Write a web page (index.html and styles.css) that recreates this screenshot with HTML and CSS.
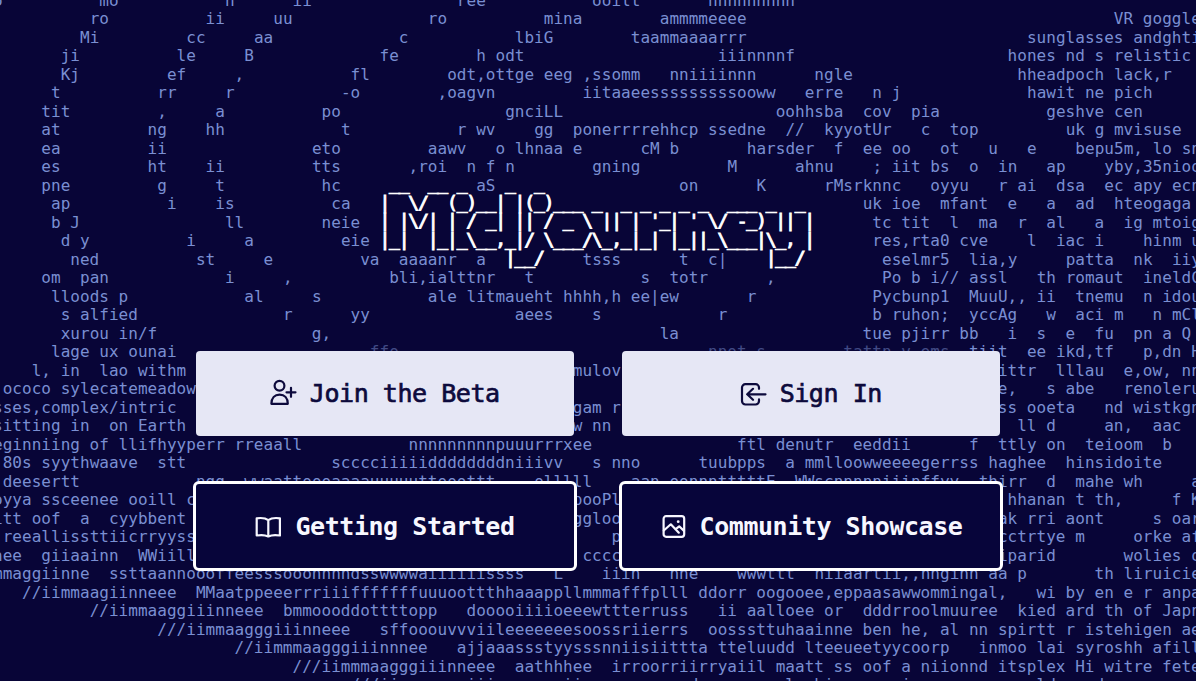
FILE: index.html
```html
<!DOCTYPE html>
<html lang="en">
<head>
<meta charset="utf-8">
<title>Midjourney</title>
<link rel="stylesheet" href="styles.css">
</head>
<body>
<main class="hero">
<pre class="field" id="field" aria-hidden="true"></pre>
<pre class="logo" aria-label="Midjourney"> __  __ _    _  _
|  \/  (_)__| |(_)___ _  _ _ _ _ _  ___ _  _
| |\/| | / _| || / _ \ || | '_| ' \/ -_) || |
|_|  |_|_\__,_|/ \___/\_,_|_| |_||_\___|\_, |
             |__/                       |__/</pre>
<nav class="actions">
  <a class="btn btn-light">
    <svg class="icon" viewBox="0 0 28 28"><circle cx="9.500" cy="6.800" r="4.900"/><path d="M1.400 24.800c0-6 3.400-9.200 8.200-9.200s8.200 3.200 8.200 9.200z"/><path d="M21 8.800v9M16.500 13.300h9"/></svg>
    <span>Join the Beta</span>
  </a>
  <a class="btn btn-light">
    <svg class="icon" viewBox="0 0 28 28"><path d="M19 9.800V8.600a3.400 3.400 0 0 0-3.400-3.400H5.400A3.400 3.400 0 0 0 2 8.600v13.500a3.400 3.400 0 0 0 3.400 3.400h10.200a3.400 3.400 0 0 0 3.400-3.400v-1.700"/><path d="M25.500 15.300H7.200M13 9.800l-5.800 5.500 5.800 5.500"/></svg>
    <span>Sign In</span>
  </a>
  <a class="btn btn-dark">
    <svg class="icon" viewBox="0 0 28 28"><path d="M13.300 8.200C10.500 6 6 5.700 1.700 6.300v17.200c4.300-.8 8.800-.4 11.600 1 2.800-1.400 7.300-1.800 11.600-1V6.300c-4.300-.6-8.800-.3-11.600 1.900zV24"/></svg>
    <span>Getting Started</span>
  </a>
  <a class="btn btn-dark">
    <svg class="icon" viewBox="0 0 28 28"><rect x="3.600" y="4.200" width="20.600" height="20.600" rx="2.500"/><path d="M3.800 18.500l7-6.200 8 8.400M15.400 17.300l3.800-3 4.800 4.600"/><circle class="dot" cx="18.200" cy="9.700" r="1.400"/></svg>
    <span>Community Showcase</span>
  </a>
</nav>
</main>
<script src="field.js"></script>
</body>
</html>
```
FILE: styles.css
```css
html, body {
  margin: 0;
  height: 100%;
  overflow: hidden;
  background: #080537;
}

.hero {
  position: relative;
  box-sizing: border-box;
  width: 1196px;
  height: 681px;
  overflow: hidden;
  padding: 175px 193px 0;
}

.field,
.logo {
  margin: 0;
  white-space: pre;
  font-family: "DejaVu Sans Mono", monospace;
  line-height: 18.5px;
}

.field {
  position: absolute;
  top: -8.3px;
  left: -7px;
  font-size: 16px;
  letter-spacing: 0.029px;
  color: #7a8fd2;
}

.faded { opacity: 0.5; }

.logo {
  position: relative;
  height: 173px;
  padding-left: 186.4px;
  font-size: 18px;
  letter-spacing: -1.18px;
  color: #fff;
  -webkit-text-stroke: 1px #fff;
}

.actions {
  position: relative;
  display: grid;
  grid-template-columns: 384px 384px;
  grid-auto-rows: 90px;
  gap: 43px 42px;
}

.btn {
  box-sizing: border-box;
  display: flex;
  align-items: center;
  justify-content: center;
  gap: 12px;
  border-radius: 6px;
  font-family: "DejaVu Sans Mono", monospace;
  font-size: 25px;
  letter-spacing: -0.45px;
  white-space: pre;
}

.btn-light {
  margin: 2.5px 3px 2.5px 2.5px;
  border-radius: 4px;
  background: #e6e7f5;
  color: #0d0a3c;
  -webkit-text-stroke: 0.7px #0d0a3c;
}

.btn-dark {
  border: 3px solid #fff;
  background: #07053a;
  color: #f7f7ff;
  font-weight: 700;
}

.icon {
  flex: none;
  width: 28px;
  height: 28px;
  fill: none;
  stroke: currentColor;
  stroke-width: 2.2;
  stroke-linecap: round;
  stroke-linejoin: round;
}

.dot {
  fill: currentColor;
  stroke: none;
}
```
FILE: field.js
```js
// Each row lists its words as: column, text, column, text ...
// A leading "~" marks a word that is drawn faded.
const rows = [
  [0,"o",11,"mo",24,"n",31,"ii",48,"ree",62,"ooilt",74,"nnnnnnnnn"],
  [10,"ro",22,"ii",29,"uu",45,"ro",57,"mina",69,"ammmmeeee",116,"VR goggle"],
  [9,"Mi",20,"cc",27,"aa",42,"c",54,"lbiG",66,"taammaaaarrr",107,"sunglasses andghti"],
  [7,"ji",19,"le",26,"B",40,"fe",50,"h odt",75,"iiinnnnf",105,"hones nd s relistic"],
  [7,"Kj",18,"ef",25,",",37,"fl",47,"odt,ottge eeg ,ssomm",70,"nniiiinnn",85,"ngle",106,"hheadpoch lack,r"],
  [6,"t",17,"rr",24,"r",36,"-o",46,",oagvn",61,"iitaaeesssssssssooww",84,"erre",91,"n j",107,"hawit ne pich"],
  [5,"tit",17,",",23,"a",34,"po",53,"gnciLL",81,"oohhsba",90,"cov",95,"pia",109,"geshve cen"],
  [5,"at",16,"ng",22,"hh",36,"t",48,"r wv",56,"gg",60,"ponerrrrehhcp ssedne",82,"//",86,"kyyotUr",96,"c",99,"top",111,"uk g mvisuse"],
  [5,"ea",16,"ii",33,"eto",45,"aawv",52,"o lhnaa e",67,"cM b",78,"harsder",87,"f",90,"ee oo",98,"ot",103,"u",107,"e",112,"bepu5m, lo sn"],
  [5,"es",16,"ht",22,"ii",33,"tts",43,",roi",49,"n f n",62,"gning",76,"M",83,"ahnu",91,"; iit bs",101,"o",104,"in",109,"ap",115,"yby,35nioo"],
  [5,"pne",17,"g",23,"t",34,"hc",50,"aS",71,"on",79,"K",86,"rMsrknnc",97,"oyyu",104,"r ai",110,"dsa",115,"ec apy ecn"],
  [6,"ap",18,"i",23,"is",35,"ca",90,"uk ioe",98,"mfant",105,"e",109,"a",112,"ad",116,"hteogaga"],
  [6,"b J",24,"ll",34,"neie",91,"tc tit",99,"l",102,"ma",106,"r",109,"al",114,"a",117,"ig mtoig"],
  [7,"d y",20,"i",26,"a",36,"eie",91,"res,rta0 cve",107,"l",110,"iac i",119,"hinm u"],
  [8,"ned",21,"st",28,"e",38,"va",42,"aaaanr",50,"a",61,"tsss",71,"t",74,"c|",92,"eselmr5",101,"lia,y",111,"patta",118,"nk",122,"iiy"],
  [5,"om",9,"pan",24,"i",30,",",41,"bli,ialttnr",55,"t",67,"s",70,"totr",80,",",92,"Po b i// assl",108,"th romaut",119,"ineldC"],
  [6,"lloods p",26,"al",33,"s",45,"ale litmaueht hhhh,h ee|ew",78,"r",91,"Pycbunp1",101,"MuuU,, ii",112,"tnemu",119,"n idou"],
  [7,"s alfied",30,"r",37,"yy",54,"aees",62,"s",75,"r",91,"b ruhon;",101,"yccAg",109,"w",112,"aci m",120,"n mCl"],
  [7,"xurou in/f",33,"g,",69,"la",90,"tue pjirr bb",105,"i",108,"s",111,"e",114,"fu",118,"pn a Q"],
  [6,"lage ux ounai",39,"~ffo",74,"~nnot s",88,"~tattn v ems",101,"tiit",107,"ee ikd,tf",119,"p,dn H"],
  [4,"l, in",11,"lao withm",60,"mulov",104,"ittr",110,"lllau",117,"e,ow, nn"],
  [1,"ococo sylecatemeadow",104,"e,",109,"s abe",117,"renoleru"],
  [0,"sses,complex/intric",60,"gam r",104,"ss ooeta",115,"nd wistkgn"],
  [0,"sitting in",12,"on Earth",60,"w nn",106,"ll d",115,"an,",120,"aac"],
  [0,"eginniing of llifhyyperr rreaall",43,"nnnnnnnnnpuuurrrxee",77,"ftl denutr",89,"eeddii",101,"f",104,"ttly on",113,"teioom",121,"b"],
  [1,"80s syythwaave",17,"stt",35,"scccciiiiiddddddddniiivv",62,"s nno",73,"tuubpps",82,"a mmlloowweeeegerrss haghee",111,"hinsidoite"],
  [1,"deesertt",21,"ngg",26,"wwaattoooaaaauuuuuttooottt",56,"olllll",66,"aan oonnntttttE,",83,"WWscnnnnniiinffyy",102,"thirr",109,"d",112,"mahe wh",124,"a"],
  [0,"oyya ssceenee ooill c",60,"pooPl",105,"hhanan t th,",122,"f K"],
  [0,"itt oof",9,"a",12,"cyybbent",60,"ggloo",104,"ak rri aont",120,"s oar"],
  [1,"reeallissttiicrryyss",64,"p",104,"cctrtye m",118,"orke af"],
  [0,"nee",5,"giiaainn",15,"WWiill",61,"cccc",104,"iparid",117,"wolies o"],
  [0,"mmaggiinne",12,"ssttaannoooffeesssooonnnndsswwwwaiiiiiissss",58,"L",63,"iiin",70,"nhe",77,"wwwttt",85,"niiaartii,,nnginn aa p",114,"th liruicie"],
  [3,"//iimmaagiinneee",21,"MMaatppeeerrriiifffffffuuuoottthhaaappllmmmafffplll ddorr oogooee,eppaasawwommingal,",108,"wi by en e r anpa"],
  [10,"//iimmaaggiiinneee",30,"bmmoooddottttopp",49,"dooooiiiioeeewttterruss",75,"ii aalloee or",90,"dddrroolmuuree",106,"kied ard th of Japn"],
  [17,"///iimmaagggiiinneee",40,"sffooouvvviileeeeeeesoossriierrs",74,"oosssttuhaainne ben he, al nn spirtt r istehigen ae"],
  [25,"//iimmmaagggiiinnnee",48,"ajjaaassstyysssnniisiittta tteluudd lteeueetyycoorp",102,"inmoo lai syroshh afill"],
  [31,"///iimmmaagggiiinneee",54,"aathhhee",64,"irroorriirryaiil maatt ss oof a niionnd itsplex Hi witre fete"],
  [37,"///iimmmaaggiiinneee",59,"ii",72,"d",82,"l",85,"hi",94,"i",108,"ld",114,"d"]
];

const field = document.getElementById("field");
for (const row of rows) {
  let end = 0;
  for (let i = 0; i < row.length; i += 2) {
    const faded = row[i + 1].startsWith("~");
    const text = faded ? row[i + 1].slice(1) : row[i + 1];
    field.append(" ".repeat(row[i] - end));
    if (faded) {
      const span = document.createElement("span");
      span.className = "faded";
      span.textContent = text;
      field.append(span);
    } else {
      field.append(text);
    }
    end = row[i] + text.length;
  }
  field.append("\n");
}
```
